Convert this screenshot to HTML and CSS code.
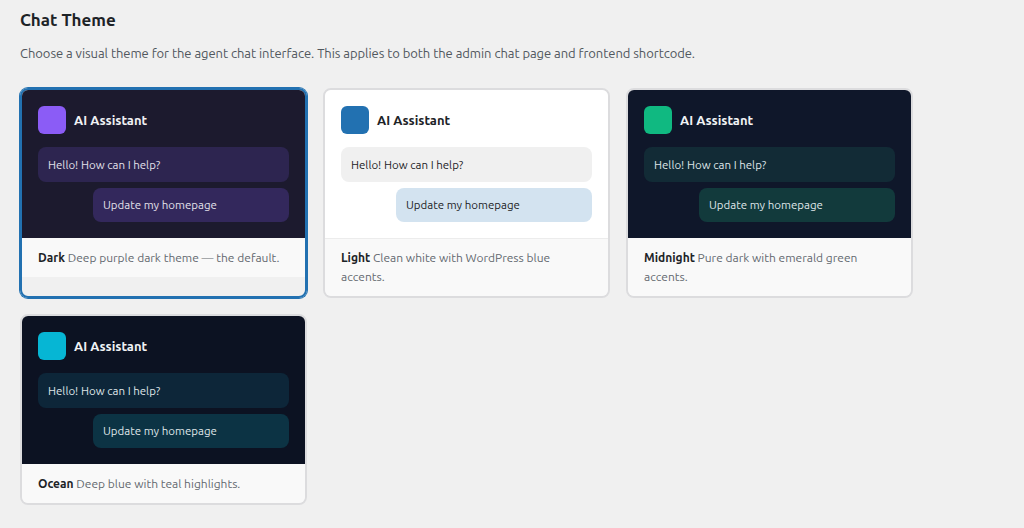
FILE: index.html
```html
<!DOCTYPE html>
<html lang="en">
<head>
<meta charset="utf-8">
<title>Chat Theme</title>
<link rel="stylesheet" href="styles.css">
</head>
<body>
<div class="page">
  <h2 class="title">Chat Theme</h2>
  <p class="desc">Choose a visual theme for the agent chat interface. This applies to both the admin chat page and frontend shortcode.</p>
  <div class="grid">
    <div class="card card-selected theme-dark">
      <div class="preview">
        <div class="head"><span class="avatar"></span><span class="name">AI Assistant</span></div>
        <div class="bubble bot">Hello! How can I help?</div>
        <div class="bubble user">Update my homepage</div>
      </div>
      <div class="foot"><strong>Dark</strong> Deep purple dark theme — the default.</div>
    </div>
    <div class="card theme-light">
      <div class="preview">
        <div class="head"><span class="avatar"></span><span class="name">AI Assistant</span></div>
        <div class="bubble bot">Hello! How can I help?</div>
        <div class="bubble user">Update my homepage</div>
      </div>
      <div class="foot"><strong>Light</strong> Clean white with WordPress blue accents.</div>
    </div>
    <div class="card theme-midnight">
      <div class="preview">
        <div class="head"><span class="avatar"></span><span class="name">AI Assistant</span></div>
        <div class="bubble bot">Hello! How can I help?</div>
        <div class="bubble user">Update my homepage</div>
      </div>
      <div class="foot"><strong>Midnight</strong> Pure dark with emerald green accents.</div>
    </div>
    <div class="card theme-ocean">
      <div class="preview">
        <div class="head"><span class="avatar"></span><span class="name">AI Assistant</span></div>
        <div class="bubble bot">Hello! How can I help?</div>
        <div class="bubble user">Update my homepage</div>
      </div>
      <div class="foot"><strong>Ocean</strong> Deep blue with teal highlights.</div>
    </div>
  </div>
</div>
</body>
</html>
```

FILE: styles.css
```css
* { box-sizing: border-box; }
html, body { margin: 0; padding: 0; }
body {
  background: #f0f0f0;
  font-family: "Ubuntu", "Open Sans", "Noto Sans", sans-serif;
  color: #1d2327;
}
.page { padding: 8px 20px 20px; }
.title {
  margin: 0;
  font-size: 17px;
  line-height: 23px;
  font-weight: 600;
  color: #1d2327;
}
.desc {
  margin: 12px 0 25px;
  font-size: 13px;
  line-height: 20px;
  color: #50575e;
  letter-spacing: -0.05px;
}
.grid {
  display: grid;
  grid-template-columns: repeat(3, 287px);
  gap: 16px;
}
.card {
  border: 2px solid #dcdcde;
  border-radius: 8px;
  overflow: hidden;
  display: flex;
  flex-direction: column;
}
.card-selected {
  border-color: #2271b1;
  box-shadow: 0 0 0 1px #2271b1;
}
.preview {
  padding: 16px;
  display: flex;
  flex-direction: column;
}
.head {
  display: flex;
  align-items: center;
  gap: 8px;
  margin-bottom: 13px;
}
.avatar {
  width: 28px;
  height: 28px;
  border-radius: 6px;
  flex: none;
}
.name {
  font-size: 13px;
  font-weight: 600;
}
.bubble {
  font-size: 11.5px;
  line-height: 17px;
  padding: 9px 10px;
  border-radius: 8px;
}
.bubble.user {
  margin-top: 6px;
  margin-left: 55px;
  padding: 8px 10px 9px;
}
.foot {
  background: #f9f9f9;
  padding: 10px 16px;
  font-size: 12px;
  line-height: 19px;
  color: #646970;
}
.foot strong { color: #1d2327; font-weight: 600; }

.theme-dark .preview { background: #1c1a2e; }
.theme-dark .avatar { background: #8b5cf6; }
.theme-dark .name { color: #f1f1f4; }
.theme-dark .bubble { background: #2d2550; color: #e2e0ea; }
.theme-dark .bubble.user { background: #33285c; }

.theme-light .preview { background: #ffffff; }
.theme-light .avatar { background: #2271b1; }
.theme-light .name { color: #1d2327; }
.theme-light .bubble { background: #f0f0f0; color: #1d2327; }
.theme-light .bubble.user { background: #d3e3f0; }
.theme-light .foot { border-top: 1px solid #ececec; padding-top: 9px; }

.theme-midnight .preview { background: #0f172a; }
.theme-midnight .avatar { background: #10b981; }
.theme-midnight .name { color: #f1f3f5; }
.theme-midnight .bubble { background: #122b36; color: #dfe5e8; }
.theme-midnight .bubble.user { background: #123a3c; }

.theme-ocean .preview { background: #0c1222; }
.theme-ocean .avatar { background: #06b6d4; }
.theme-ocean .name { color: #f1f3f5; }
.theme-ocean .bubble { background: #0d2639; color: #dfe5e8; }
.theme-ocean .bubble.user { background: #0c3344; }
```
